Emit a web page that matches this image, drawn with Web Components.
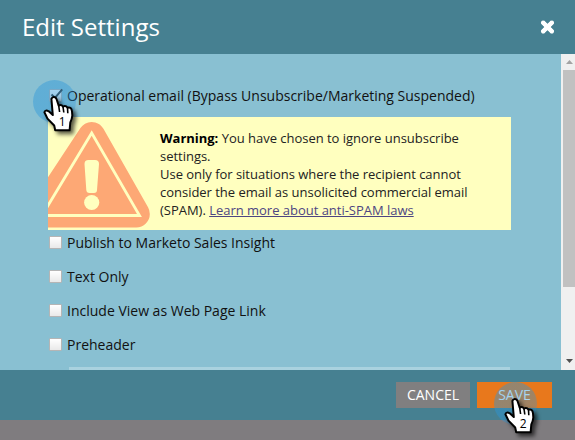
<!DOCTYPE html>
<html lang="en"><head><meta charset="utf-8"><title>Edit Settings</title>
<style>html,body{margin:0;width:575px;height:440px;overflow:hidden;background:#7f7c7f;font-family:"Open Sans",sans-serif}</style></head>
<body>
<settings-dialog></settings-dialog>
<script>
const define=(name,html,init)=>customElements.define(name,class extends HTMLElement{
  constructor(){super();this.attachShadow({mode:'open'}).innerHTML=html;}
  connectedCallback(){if(init)init(this,this.shadowRoot);}
});

define('dialog-header',`<style>
:host{display:flex;height:54px;box-sizing:border-box;padding:0 20px 0 22px;align-items:center;justify-content:space-between;background:#468091;color:#fff;font-size:24px;line-height:54px}
svg{display:block}
</style><span><slot></slot></span>
<svg width="15" height="16" viewBox="0 0 15 16"><path d="M2.5 3 12.5 13M12.5 3 2.5 13" stroke="#fff" stroke-width="4.4"  stroke-linecap="butt"/><path d="M3 3.5 12 12.5M12 3.5 3 12.5" stroke="#fff" stroke-width="4" stroke-linecap="round"/></svg>`);

define('check-option',`<style>
:host{display:flex;height:18px;align-items:center;gap:5px;font-size:14px;line-height:18px;color:#111;white-space:nowrap}
i{width:13px;height:13px;box-sizing:border-box;border:1px solid #b5b5b5;border-radius:1px;background:linear-gradient(#fff,#e9e9e9);position:relative;top:-.5px}
svg{display:none;position:absolute;left:-1px;top:-2px;overflow:visible}
:host([checked]) svg{display:block}
</style><i><svg width="14" height="13" viewBox="0 0 14 13"><path d="M2.5 6.5 6 9.8 13.2 1.3" fill="none" stroke="#333" stroke-width="2"/></svg></i><span><slot></slot></span>`);

define('warning-note',`<style>
:host{display:flex;width:463px;height:113px;background:#ffffbf;color:#222;font-size:13px;line-height:18px;letter-spacing:-.02px;overflow:hidden}
svg{flex:none;display:block}
div{margin:12px 0 0 10px;white-space:nowrap}
</style>
<svg width="102" height="113" viewBox="0 0 102 113">
<path d="M43.7 18.5 -8 97H88.3Z" fill="#fda875" stroke="#fda875" stroke-width="27" stroke-linejoin="round"/>
<path d="M43.7 16-6 98.5H91.5Z" fill="#fda875" stroke="#ffffbf" stroke-width="2.8"/>
<path d="M36.5 47Q36.5 43 40.5 43H47Q51 43 51 47L49 73Q49 76 46 76H41.5Q38.5 76 38.3 73Z" fill="#ffffbf"/><circle cx="43.7" cy="85.5" r="7.6" fill="#ffffbf"/>
</svg><div><slot></slot></div>`);

define('scroll-bar',`<style>
:host{display:flex;flex-direction:column;width:14px;height:316px;background:#f0f0f0}
svg{display:block;flex:none}
b{display:block;width:12px;height:217px;margin-left:2px;background:#c1c1c1}
span{flex:1}
</style><svg width="14" height="16"><path d="M5 10 8.5 6 12 10Z" fill="#a3a3a3"/></svg><b></b><span></span><svg width="14" height="17"><path d="M5 6 12 6 8.5 10Z" fill="#505050"/></svg>`);

define('dialog-button',`<style>
:host{display:block;width:74px;height:26px;background:#807f80;color:#fff;font-size:14px;line-height:26px;text-align:center}
:host([primary]){width:75px;background:#e8781c}
</style><slot></slot>`);

define('step-pointer',`<style>
:host{position:absolute;display:block;width:60px;height:60px}
svg{display:block;overflow:visible}
.hand{filter:drop-shadow(3px 3px 2px rgba(0,0,0,.65))}
text{font:12px "Open Sans",sans-serif}
</style><svg width="60" height="60" viewBox="0 0 60 60">
<defs><linearGradient id="g" x1="0" y1="0" x2="1" y2="1"><stop offset=".15" stop-color="#2a96da" stop-opacity=".43"/><stop offset=".45" stop-color="#2a96da" stop-opacity=".43"/><stop offset="1" stop-color="#2a96da" stop-opacity=".26"/></linearGradient></defs>
<circle cx="21.5" cy="21.5" r="21.5" fill="url(#g)"/>
<g class="hand"><path d="M18.4 18.8Q19.2 16.7 21.2 16.9 22.8 17 23.5 19L25.7 25.7Q28.2 24 30 26.6 32.6 25 34.5 27.7 38.4 26.6 39 31.5L39.3 35.5Q39 39 37.3 42.5L36.6 50.3H22.2L21.2 45.5 14.5 38.6 11.4 32.2Q12.2 29.5 15.8 31.3L19.8 35Z" fill="#fff" stroke="#000" stroke-width="2" stroke-linejoin="round"/>
<path d="M25.7 25.7 26.6 32M30 26.6 30.8 32.5M34.5 27.7 34.8 33.2" stroke="#000" stroke-width="1.6" fill="none"/></g>
<text x="29.2" y="46" text-anchor="middle"></text></svg>`,(el,r)=>{r.querySelector('text').textContent=el.getAttribute('step');});

define('settings-dialog',`<style>
:host{display:block;position:relative;width:575px;height:440px;overflow:hidden}
main{display:flex;height:316px;background:#89c0d2;overflow:hidden}
form{flex:1;box-sizing:border-box;padding:33px 0 0 49px;display:flex;flex-direction:column}
warning-note{margin:12px 0 4px -1px;flex:none}
check-option{margin-bottom:16px;flex:none}
check-option.first{margin-bottom:0}
check-option.last{margin-bottom:13px}
hr{flex:none;margin:0 0 0 20px;border:0;width:441px;height:20px;background:#a9d2df}
a{color:#4d4582;text-decoration:underline}
strong{color:#000}
footer{display:flex;height:50px;box-sizing:border-box;padding:12px 23px 0;justify-content:flex-end;gap:7px;background:#468091}
.one{left:33px;top:80px}.two{left:494px;top:382px}
</style>
<dialog-header>Edit Settings</dialog-header>
<main><form>
<check-option class="first" checked>Operational email (Bypass Unsubscribe/Marketing Suspended)</check-option>
<warning-note><strong>Warning:</strong> You have chosen to ignore unsubscribe<br>settings.<br>Use only for situations where the recipient cannot<br>consider the email as unsolicited commercial email<br>(SPAM). <a>Learn more about anti-SPAM laws</a></warning-note>
<check-option>Publish to Marketo Sales Insight</check-option>
<check-option>Text Only</check-option>
<check-option>Include View as Web Page Link</check-option>
<check-option class="last">Preheader</check-option>
<hr></form><scroll-bar></scroll-bar></main>
<footer><dialog-button>CANCEL</dialog-button><dialog-button primary>SAVE</dialog-button></footer>
<step-pointer class="one" step="1"></step-pointer>
<step-pointer class="two" step="2"></step-pointer>`);
</script></body></html>
